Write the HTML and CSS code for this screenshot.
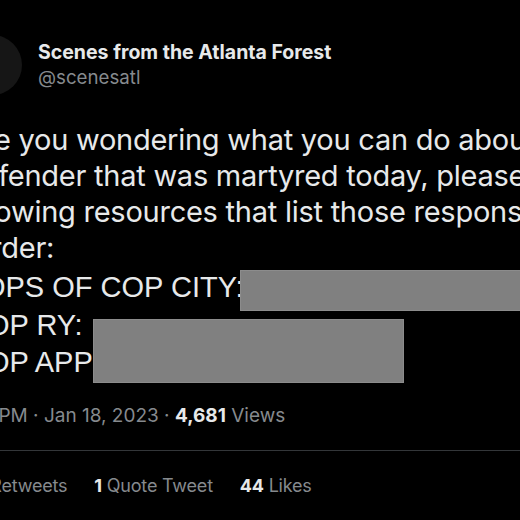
FILE: index.html
```html
<!DOCTYPE html>
<html>
<head>
    <title>Scenes from the Atlanta Forest on Twitter</title>
<link rel="stylesheet" href="styles.css">
</head>
<body>

<div class="tweet">

  <div class="head">
    <div class="avatar"></div>
    <div class="who">
      <div class="name">Scenes from the Atlanta Forest</div>
      <div class="handle">@scenesatl</div>
    </div>
  </div>

  <!-- the screenshot is cropped on both sides, so the lines run off the edges -->
  <div class="copy">
    <div class="line nudge-right">Are you wondering what you can do about the</div>
    <div class="line nudge-right">defender that was martyred today, please see the</div>
    <div class="line nudge-left">following resources that list those responsible for</div>
    <div class="line nudge-more">murder:</div>
  </div>

  <div class="plain">
    <div class="line">COPS OF COP CITY:</div>
    <div class="line nudge-caps">COP RY:</div>
    <div class="line nudge-caps">COP APP</div>
    <!-- blacked out links -->
    <div class="redact redact-one"></div>
    <div class="redact redact-two"></div>
  </div>

  <div class="meta">
    4:07 PM &middot; Jan 18, 2023 &middot; <b>4,681</b> Views
  </div>

  <div class="stats">
    <span><b>9</b> Retweets</span>
    <span><b>1</b> Quote Tweet</span>
    <span><b>44</b> Likes</span>
  </div>

</div>

</body>
</html>
```

FILE: styles.css
```css
body {
  background-color: #000;
  margin: 0px;
  overflow: hidden;
  color: #e7e9ea;
  font-family: Inter, "Liberation Sans", sans-serif;
}

.tweet {
  margin-left: -38px;
  padding-top: 35px;
  white-space: nowrap;
}

/* avatar + names */

.head {
  display: flex;
  align-items: center;
  gap: 16px;
}

.avatar {
  width: 60px;
  height: 60px;
  border-radius: 50%;
  background-color: #161616;
  flex-shrink: 0;
}

.name {
  font-size: 19.5px;
  font-weight: bold;
  line-height: 26px;
}

.handle {
  font-size: 18.7px;
  line-height: 26px;
  color: #868a8e;
}

/* tweet body */

.copy {
  margin-top: 27px;
  font-size: 29px;
  letter-spacing: -0.25px;
  line-height: 36px;
}

.nudge-right {
  text-indent: 2px;
}

.nudge-left {
  text-indent: -8px;
}

.nudge-more {
  text-indent: -13px;
}

.plain {
  position: relative;
  margin-top: 3px;
  font-family: "Liberation Sans", Arial, sans-serif;
  font-size: 29px;
  line-height: 37.5px;
}

.nudge-caps {
  text-indent: 4px;
}

.redact {
  position: absolute;
  background-color: #808080;
  border: 1px solid #8c8c8c;
}

.redact-one {
  left: 278px;
  top: 1px;
  width: 300px;
  height: 39px;
}

.redact-two {
  left: 131px;
  top: 50px;
  width: 309px;
  height: 62px;
}

/* time + counts */

.meta {
  margin-top: 22px;
  margin-left: -9px;
  font-size: 19px;
  line-height: 24px;
  color: #868a8e;
  padding-bottom: 22px;
  border-bottom: 1px solid #333639;
}

.meta b {
  color: #e7e9ea;
}

.stats {
  display: flex;
  gap: 27px;
  padding: 23px 0px 22px 12px;
  font-size: 18px;
  letter-spacing: -0.2px;
  line-height: 24px;
  color: #868a8e;
  border-bottom: 1px solid #333639;
}

.stats b {
  color: #e7e9ea;
}
```
